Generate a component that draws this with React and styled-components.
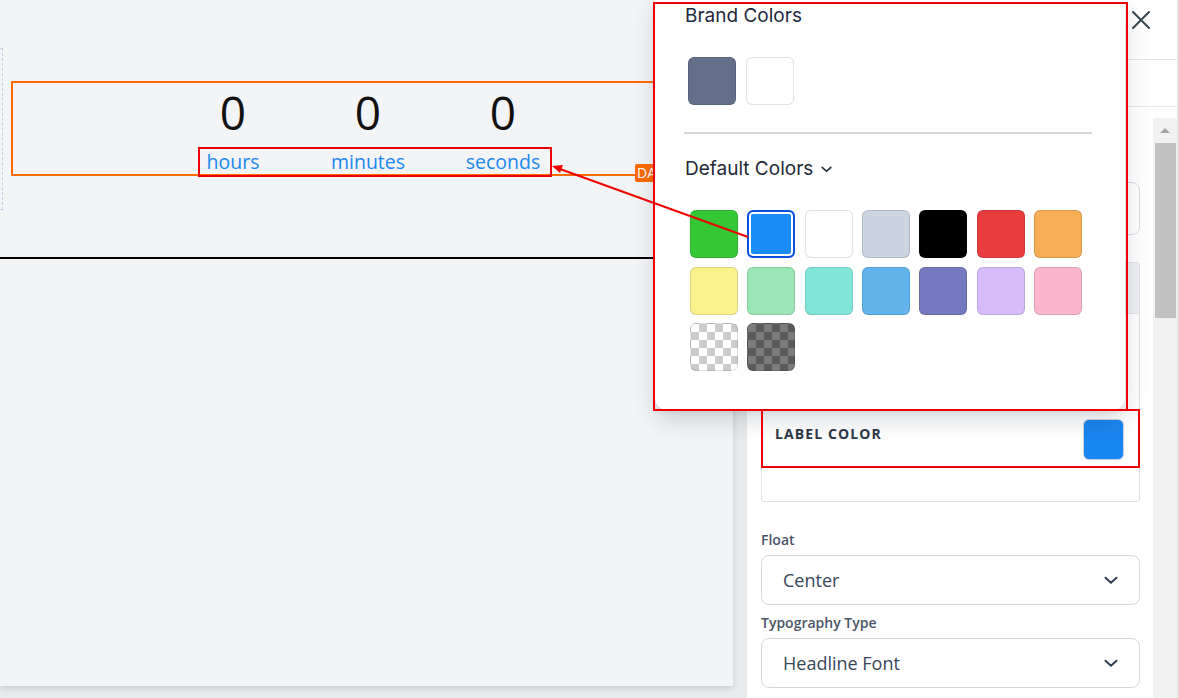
import React from "react";
import styled, { createGlobalStyle } from "styled-components";

const GlobalStyle = createGlobalStyle`
  html, body { margin: 0; padding: 0; }
  body {
    background: #e9eaec;
    overflow: hidden;
    font-family: "Open Sans", "Noto Sans", sans-serif;
  }
`;

const Page = styled.div`
  position: relative;
  display: flex;
  width: 1179px;
  height: 698px;
  overflow: hidden;
  background: #e9eaec;
`;

const Workspace = styled.div`
  width: 747px;
  flex: none;
  background: #e9eaec;
`;

const Canvas = styled.div`
  width: 733px;
  height: 686px;
  background: #f3f4f6;
  box-shadow: 0 2px 6px rgba(0, 0, 0, 0.14);
  display: flex;
  flex-direction: column;
`;

const TopRow = styled.div`
  display: flex;
  align-items: flex-start;
`;

const DashedEdge = styled.div`
  margin-top: 48px;
  width: 2px;
  height: 160px;
  border: 1px dashed #c9cce6;
  border-left: none;
`;

const CountdownBox = styled.div`
  position: relative;
  margin-top: 81px;
  margin-left: 8px;
  width: 714px;
  box-sizing: border-box;
  border: 2px solid #ff6a00;
  padding-top: 6px;
  display: flex;
  justify-content: center;
`;

const Unit = styled.div`
  width: 135px;
  display: flex;
  flex-direction: column;
  align-items: center;
`;

const Number = styled.div`
  font-family: "Open Sans", sans-serif;
  font-size: 46px;
  line-height: 46px;
  color: #111;
`;

const UnitLabel = styled.div`
  margin-top: 15px;
  font-family: "Open Sans", sans-serif;
  font-size: 19.5px;
  line-height: 24px;
  color: #1b87f0;
`;

const Tag = styled.div`
  position: absolute;
  left: 622px;
  top: 81px;
  width: 18px;
  height: 18px;
  background: #ff6a00;
  color: #fff;
  font-family: "Open Sans", sans-serif;
  font-size: 14px;
  line-height: 18px;
  padding-left: 2px;
  box-sizing: border-box;
  border-radius: 2px 0 0 2px;
  overflow: hidden;
  white-space: nowrap;
`;

const HRule = styled.div`
  margin-top: 47px;
  height: 2px;
  width: 100%;
  background: #000;
`;

/* ---------- Right panel ---------- */

const Panel = styled.div`
  width: 432px;
  flex: none;
  background: #fff;
  display: flex;
  flex-direction: column;
  border-right: 2px solid #e3e3e3;
  box-sizing: border-box;
`;

const PanelHeader = styled.div`
  height: 60px;
  box-sizing: border-box;
  border-bottom: 1px solid #e5e7eb;
  display: flex;
  justify-content: flex-end;
  align-items: flex-start;
  padding: 11px 27px 0 0;
`;

const CloseButton = styled.button`
  border: none;
  background: none;
  padding: 0;
  width: 18px;
  height: 18px;
  display: flex;
  color: #37474f;
`;

const TabBar = styled.div`
  height: 47px;
  box-sizing: border-box;
  border-bottom: 1px solid #e5e7eb;
`;

const PanelBody = styled.div`
  flex: 1;
  display: flex;
  min-height: 0;
`;

const Content = styled.div`
  width: 379px;
  margin-left: 14px;
  padding-top: 48px;
  box-sizing: content-box;
`;

const FieldLabel = styled.div`
  font-family: "Open Sans", sans-serif;
  font-size: 14px;
  font-weight: 600;
  line-height: 20px;
  color: #4a5568;
  margin-top: ${(p) => p.$mt || 0}px;
`;

const TextInput = styled.div`
  margin-top: 7px;
  height: 53px;
  box-sizing: border-box;
  border: 1px solid #d6dae0;
  border-radius: 8px;
  background: #fff;
`;

const Group = styled.div`
  margin-top: 27px;
  border: 1px solid #dfe2e7;
  border-radius: 3px;
  background: #fff;
  padding-bottom: 33px;
`;

const GroupHeader = styled.div`
  height: 51px;
  background: #eef0f3;
  border-bottom: 1px solid #e2e5ea;
  box-sizing: border-box;
`;

const GroupRows = styled.div`
  padding-top: 40px;
`;

const ColorRow = styled.div`
  height: 57px;
  display: flex;
  justify-content: space-between;
  align-items: flex-start;
  padding: 0 15px 0 13px;
`;

const RowLabel = styled.div`
  margin-top: 13px;
  font-family: "Open Sans", sans-serif;
  font-size: 14px;
  font-weight: 700;
  line-height: 20px;
  letter-spacing: 1.1px;
  color: #2d3748;
`;

const RowSwatch = styled.div`
  margin-top: 8px;
  width: 41px;
  height: 41px;
  box-sizing: border-box;
  border-radius: 6px;
  border: 1px solid #c9d3e0;
  background: ${(p) => p.$color};
`;

const Select = styled.div`
  margin-top: 5px;
  height: 50px;
  box-sizing: border-box;
  border: 1px solid #d4d8de;
  border-radius: 8px;
  background: #fff;
  display: flex;
  align-items: center;
  justify-content: space-between;
  padding: 0 21px 0 21px;
  font-family: "Open Sans", sans-serif;
  font-size: 18px;
  color: #37475a;
`;

const Scrollbar = styled.div`
  margin-top: 11px;
  margin-left: 13px;
  width: 24px;
  background: #f1f1f1;
  display: flex;
  flex-direction: column;
  align-items: center;
`;

const ScrollArrow = styled.div`
  margin-top: 10px;
  width: 0;
  height: 0;
  border-left: 5px solid transparent;
  border-right: 5px solid transparent;
  border-bottom: 5px solid #a3a3a3;
`;

const ScrollThumb = styled.div`
  margin-top: 10px;
  width: 21px;
  height: 175px;
  background: #c1c1c1;
`;

/* ---------- Popover ---------- */

const Popover = styled.div`
  position: absolute;
  left: 655px;
  top: 0;
  width: 470px;
  height: 410px;
  box-sizing: border-box;
  background: #fff;
  border-radius: 0 0 12px 12px;
  box-shadow: 0 10px 24px rgba(15, 23, 42, 0.16), 0 2px 6px rgba(15, 23, 42, 0.08);
  padding: 4px 35px 0 30px;
  font-family: Inter, "Open Sans", sans-serif;
  color: #1e293b;
`;

const PopTitle = styled.div`
  font-size: 19px;
  line-height: 24px;
  display: flex;
  align-items: center;
  gap: 8px;
  margin-top: ${(p) => p.$mt || 0}px;
`;

const BrandRow = styled.div`
  margin-top: 29px;
  padding-left: 3px;
  display: flex;
  gap: 10px;
`;

const Divider = styled.div`
  margin-top: 27px;
  height: 2px;
  background: #d3d8df;
  margin-right: 0;
  width: 408px;
  margin-left: -1px;
`;

const Grid = styled.div`
  margin-top: 29px;
  padding-left: 5px;
  display: grid;
  grid-template-columns: repeat(7, 48px);
  column-gap: 9.33px;
  row-gap: 8.5px;
`;

const Swatch = styled.div`
  width: 48px;
  height: 48px;
  box-sizing: border-box;
  border-radius: 6px;
  border: 1px solid rgba(15, 23, 42, 0.13);
  background: ${(p) => p.$color};
  ${(p) =>
    p.$checker === "light" &&
    `background: repeating-conic-gradient(#cbcbcb 0% 25%, #ffffff 0% 50%) 0 0 / 16px 16px;`}
  ${(p) =>
    p.$checker === "dark" &&
    `background: repeating-conic-gradient(#5b5b5b 0% 25%, #7b7b7b 0% 50%) 0 0 / 16px 16px;`}
  ${(p) =>
    p.$selected &&
    `border: 2px solid #0a4fe0; box-shadow: inset 0 0 0 2px #fff;`}
`;

/* ---------- Annotations ---------- */

const Annotation = styled.div`
  position: absolute;
  box-sizing: border-box;
  border: 2px solid #ee0000;
  pointer-events: none;
`;

const ArrowLayer = styled.svg`
  position: absolute;
  left: 0;
  top: 0;
  pointer-events: none;
`;

const Chevron = ({ size = 14, stroke = "#334155", width = 2 }) => (
  <svg width={size} height={size * 0.6} viewBox="0 0 14 8" fill="none">
    <polyline points="1.5,1.5 7,6.5 12.5,1.5" stroke={stroke} strokeWidth={width} strokeLinecap="round" strokeLinejoin="round" />
  </svg>
);

const defaults = [
  { c: "#34c834" },
  { c: "#1a8cf5", selected: true },
  { c: "#ffffff" },
  { c: "#cbd5e0" },
  { c: "#000000" },
  { c: "#e83c3e" },
  { c: "#f6ad55" },
  { c: "#faf08c" },
  { c: "#9ae6b4" },
  { c: "#81e6d9" },
  { c: "#63b3ed" },
  { c: "#7579bd" },
  { c: "#d6bcfa" },
  { c: "#fbb6ce" },
  { checker: "light" },
  { checker: "dark" },
];

export default function App() {
  return (
    <>
      <GlobalStyle />
      <Page>
        <Workspace>
          <Canvas>
            <TopRow>
              <DashedEdge />
              <CountdownBox>
                <Unit>
                  <Number>0</Number>
                  <UnitLabel>hours</UnitLabel>
                </Unit>
                <Unit>
                  <Number>0</Number>
                  <UnitLabel>minutes</UnitLabel>
                </Unit>
                <Unit>
                  <Number>0</Number>
                  <UnitLabel>seconds</UnitLabel>
                </Unit>
                <Tag>DATE</Tag>
              </CountdownBox>
            </TopRow>
            <HRule />
          </Canvas>
        </Workspace>

        <Panel>
          <PanelHeader>
            <CloseButton aria-label="Close">
              <svg width="18" height="18" viewBox="0 0 18 18" fill="none">
                <path d="M1 1 L17 17 M17 1 L1 17" stroke="#37474f" strokeWidth="2" strokeLinecap="round" />
              </svg>
            </CloseButton>
          </PanelHeader>
          <TabBar />
          <PanelBody>
            <Content>
              <FieldLabel>Label Text</FieldLabel>
              <TextInput />
              <Group>
                <GroupHeader />
                <GroupRows>
                  <ColorRow>
                    <RowLabel>NUMBER COLOR</RowLabel>
                    <RowSwatch $color="#111111" />
                  </ColorRow>
                  <ColorRow>
                    <RowLabel>LABEL COLOR</RowLabel>
                    <RowSwatch $color="#1a86f0" />
                  </ColorRow>
                </GroupRows>
              </Group>
              <FieldLabel $mt={28}>Float</FieldLabel>
              <Select>
                <span>Center</span>
                <Chevron size={14} stroke="#334155" width={2} />
              </Select>
              <FieldLabel $mt={8}>Typography Type</FieldLabel>
              <Select>
                <span>Headline Font</span>
                <Chevron size={14} stroke="#334155" width={2} />
              </Select>
            </Content>
            <Scrollbar>
              <ScrollArrow />
              <ScrollThumb />
            </Scrollbar>
          </PanelBody>
        </Panel>

        <Popover>
          <PopTitle>Brand Colors</PopTitle>
          <BrandRow>
            <Swatch $color="#64708a" />
            <Swatch $color="#ffffff" />
          </BrandRow>
          <Divider />
          <PopTitle $mt={23}>
            Default Colors
            <Chevron size={11} stroke="#1e293b" width={2} />
          </PopTitle>
          <Grid>
            {defaults.map((d, i) => (
              <Swatch key={i} $color={d.c} $checker={d.checker} $selected={d.selected} />
            ))}
          </Grid>
        </Popover>

        <Annotation style={{ left: 653, top: 2, width: 475, height: 409 }} />
        <Annotation style={{ left: 198, top: 147, width: 354, height: 30 }} />
        <Annotation style={{ left: 761, top: 409, width: 379, height: 59 }} />
        <ArrowLayer width="1179" height="698" viewBox="0 0 1179 698">
          <line x1="748" y1="237" x2="560" y2="169" stroke="#ee0000" strokeWidth="2" />
          <polygon points="552,166 563,165 560,173" fill="#ee0000" />
        </ArrowLayer>
      </Page>
    </>
  );
}
